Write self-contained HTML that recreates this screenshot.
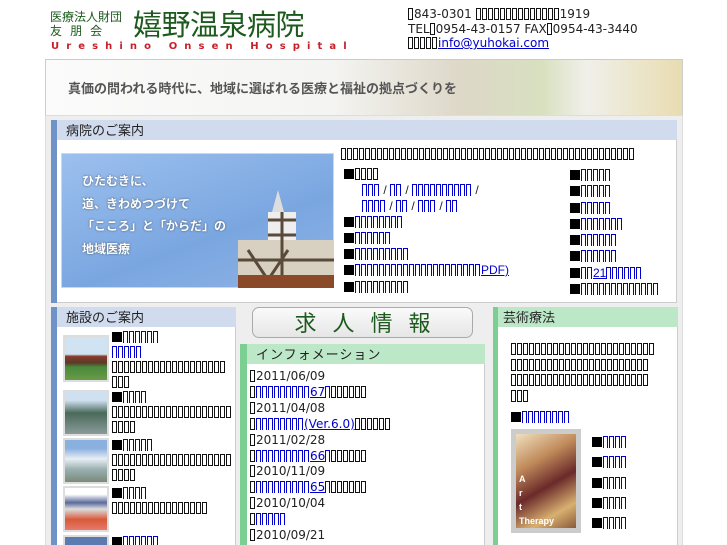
<!DOCTYPE html>
<html><head><meta charset="utf-8">
<style>
*{margin:0;padding:0;box-sizing:border-box}
html,body{width:727px;height:545px;overflow:hidden}
body{background:#fff;font-family:"Liberation Sans","DejaVu Sans","Noto Sans CJK JP",sans-serif;font-size:12px;color:#222;position:relative}
.a{position:absolute;white-space:nowrap}
.w{white-space:normal}
i.b{display:inline-block;width:5px;height:12px;border:1px solid #111;margin-right:1px;vertical-align:-2px}
a{color:#00c;text-decoration:underline}
a i.b{border-color:#00c;border-bottom:none}
.sq{display:inline-block;width:10px;height:10px;background:#000;margin-right:1px;vertical-align:-1px}
.hd{position:absolute;height:20px;font-family:"Noto Sans CJK JP",sans-serif;font-size:13px;line-height:20px;padding-left:9px;color:#222}
</style></head><body>
<div class="a" style="left:50px;top:10px;font-family:'Noto Sans CJK JP',sans-serif;color:#1d5a1d;font-size:12px;line-height:14px">医療法人財団<br>友&nbsp;&nbsp;&nbsp;朋&nbsp;&nbsp;&nbsp;会</div>
<div class="a" style="left:133px;top:4px;font-family:'Noto Sans CJK JP',sans-serif;color:#1d5a1d;font-size:29px;line-height:38px;letter-spacing:-0.5px">嬉野温泉病院</div>
<div class="a" style="left:51px;top:41px;color:#c8202a;font-size:10px;font-weight:bold;letter-spacing:7.1px;font-family:'DejaVu Sans',sans-serif">Ureshino Onsen Hospital</div>
<div class="a" style="left:408px;top:7px;font-size:12px;line-height:14.5px;font-family:'DejaVu Sans',sans-serif;color:#222">▯843-0301 ▯▯▯▯▯▯▯▯▯▯▯▯▯▯1919<br>TEL▯0954-43-0157 FAX▯0954-43-3440<br>▯▯▯▯▯<a href="#">info@yuhokai.com</a></div>
<div class="a" style="left:45px;top:59px;width:638px;height:57px;border:1px solid #ccc;background:linear-gradient(90deg,#fbfbfb 0%,#f4f4f2 45%,#ddd8c8 65%,#d8e0c0 78%,#f0f0ea 85%,#e8dcb0 100%)"></div>
<div class="a" style="left:68px;top:78px;font-family:'Noto Sans CJK JP',sans-serif;font-size:13px;color:#555;font-weight:bold">真価の問われる時代に、地域に選ばれる医療と福祉の拠点づくりを</div>
<div class="a" style="left:45px;top:115px;width:638px;height:440px;background:#eee;border:1px solid #ddd"></div>
<div class="a" style="left:51px;top:120px;width:626px;height:183px;background:#fff;border:1px solid #ccc"></div>
<div class="a" style="left:51px;top:120px;width:6px;height:183px;background:#6f93c8"></div>
<div class="hd" style="left:57px;top:120px;width:620px;background:#d0dcee">病院のご案内</div>
<div class="a" style="left:61px;top:153px;width:273px;height:135px;background:linear-gradient(160deg,#9cc0ee,#7aa6e0 60%,#8fb3e6);border:1px solid #c9d8f0"></div>
<div class="a" style="left:82px;top:170px;color:#fff;font-family:'Noto Sans CJK JP',sans-serif;font-size:12px;font-weight:bold;line-height:22.5px;text-shadow:0 0 2px #456">ひたむきに、<br>道、きわめつづけて<br>「こころ」と「からだ」の<br>地域医療</div>
<svg class="a" style="left:228px;top:190px" width="106" height="98"><polygon points="50,0 44,22 56,22" fill="#ddd"/><rect x="40" y="22" width="28" height="76" fill="#eee"/><rect x="10" y="50" width="96" height="48" fill="#d8d0c0"/><path d="M40 30h28M40 45h28M54 22v76M20 60l20 30M60 60l-20 30M10 70h96" stroke="#5a4a3a" stroke-width="3"/><rect x="10" y="85" width="96" height="13" fill="#8a4a2a"/></svg>
<div class="a" style="left:341px;top:147px"><span id="r1"></span></div>
<div class="a" style="left:344px;top:167px"><span class="sq"></span>▯▯▯▯</div>
<div class="a" style="left:362px;top:183px"><a href="#">▯▯▯</a> / <a href="#">▯▯</a> / <a href="#">▯▯▯▯▯▯▯▯▯▯</a> /</div>
<div class="a" style="left:362px;top:199px"><a href="#">▯▯▯▯</a> / <a href="#">▯▯</a> / <a href="#">▯▯▯</a> / <a href="#">▯▯</a></div>
<div class="a" style="left:344px;top:215px"><span class="sq"></span><a href="#">▯▯▯▯▯▯▯▯</a></div>
<div class="a" style="left:344px;top:231px"><span class="sq"></span><a href="#">▯▯▯▯▯▯</a></div>
<div class="a" style="left:344px;top:247px"><span class="sq"></span><a href="#">▯▯▯▯▯▯▯▯▯</a></div>
<div class="a" style="left:344px;top:263px"><span class="sq"></span><a href="#">▯▯▯▯▯▯▯▯▯▯▯▯▯▯▯▯▯▯▯▯▯PDF)</a></div>
<div class="a" style="left:344px;top:280px"><span class="sq"></span><a href="#">▯▯▯▯▯▯▯▯▯</a></div>
<div class="a" style="left:570px;top:167px;line-height:16.3px">
<div><span class="sq"></span><a href="#">▯▯▯▯▯</a></div>
<div><span class="sq"></span><a href="#">▯▯▯▯▯</a></div>
<div><span class="sq"></span><a href="#">▯▯▯▯▯</a></div>
<div><span class="sq"></span><a href="#">▯▯▯▯▯▯▯</a></div>
<div><span class="sq"></span><a href="#">▯▯▯▯▯▯</a></div>
<div><span class="sq"></span><a href="#">▯▯▯▯▯▯</a></div>
<div><span class="sq"></span><a href="#">▯▯21▯▯▯▯▯▯</a></div>
<div><span class="sq"></span><a href="#">▯▯▯▯▯▯▯▯▯▯▯▯▯</a></div>
</div>
<div class="a" style="left:51px;top:307px;width:185px;height:250px;background:#fff;border:1px solid #ccc"></div>
<div class="a" style="left:51px;top:307px;width:6px;height:250px;background:#6f93c8"></div>
<div class="hd" style="left:57px;top:307px;width:179px;background:#d0dcee">施設のご案内</div>
<div class="a" style="left:63px;top:335px;width:46px;height:47px;background:linear-gradient(#cfe3f3 40%,#8a3a2a 45%,#5a3a2a 60%,#4a8a3a 70%,#6a9a4a);border:2px solid #ddd"></div>
<div class="a" style="left:63px;top:390px;width:46px;height:46px;background:linear-gradient(#cfe0f0 20%,#4a6a5a 50%,#8a9a9a);border:2px solid #ddd"></div>
<div class="a" style="left:63px;top:438px;width:46px;height:46px;background:linear-gradient(#8ab0e0 20%,#e8eef4 45%,#9ab0b0 70%,#7a8a7a);border:2px solid #ddd"></div>
<div class="a" style="left:63px;top:486px;width:46px;height:46px;background:linear-gradient(#fff 15%,#5a6a9a 35%,#ddd 50%,#d85a3a 75%,#e87a6a);border:2px solid #ddd"></div>
<div class="a" style="left:63px;top:535px;width:46px;height:15px;background:#5a7ab0;border:2px solid #ddd"></div>
<div class="a" style="left:112px;top:330px"><span class="sq"></span><a href="#">▯▯▯▯▯▯</a></div>
<div class="a" style="left:112px;top:345px"><a href="#">▯▯▯▯▯</a></div>
<div class="a" style="left:112px;top:360px">▯▯▯▯▯▯▯▯▯▯▯▯▯▯▯▯▯▯▯</div>
<div class="a" style="left:112px;top:375px">▯▯▯</div>
<div class="a" style="left:112px;top:390px"><span class="sq"></span><a href="#">▯▯▯▯</a></div>
<div class="a" style="left:112px;top:405px">▯▯▯▯▯▯▯▯▯▯▯▯▯▯▯▯▯▯▯▯</div>
<div class="a" style="left:112px;top:420px">▯▯▯▯</div>
<div class="a" style="left:112px;top:438px"><span class="sq"></span><a href="#">▯▯▯▯▯</a></div>
<div class="a" style="left:112px;top:453px">▯▯▯▯▯▯▯▯▯▯▯▯▯▯▯▯▯▯▯▯</div>
<div class="a" style="left:112px;top:468px">▯▯▯▯</div>
<div class="a" style="left:112px;top:486px"><span class="sq"></span><a href="#">▯▯▯▯</a></div>
<div class="a" style="left:112px;top:501px">▯▯▯▯▯▯▯▯▯▯▯▯▯▯▯▯</div>
<div class="a" style="left:112px;top:535px"><span class="sq"></span><a href="#">▯▯▯▯▯▯</a></div>
<div class="a" style="left:252px;top:307px;width:221px;height:31px;border:1px solid #aaa;border-radius:7px;background:linear-gradient(#fafafa,#e6e6e6);text-align:center;font-family:'Noto Sans CJK JP',sans-serif;font-size:22px;line-height:29px;color:#1d5a1d;letter-spacing:16px;padding-left:16px">求人情報</div>
<div class="a" style="left:240px;top:344px;width:245px;height:210px;background:#fff;border:1px solid #ccc"></div>
<div class="a" style="left:240px;top:344px;width:7px;height:210px;background:#7ccf93"></div>
<div class="hd" style="left:247px;top:344px;width:238px;background:#bde8c8;letter-spacing:1px">インフォメーション</div>
<div class="a" style="left:250px;top:369px;line-height:15.9px;font-size:12px;font-family:'DejaVu Sans',sans-serif">
<div>▯2011/06/09</div><div>▯<a href="#">▯▯▯▯▯▯▯▯▯67▯</a>▯▯▯▯▯▯</div>
<div>▯2011/04/08</div><div>▯<a href="#">▯▯▯▯▯▯▯▯(Ver.6.0)</a>▯▯▯▯▯▯</div>
<div>▯2011/02/28</div><div>▯<a href="#">▯▯▯▯▯▯▯▯▯66▯</a>▯▯▯▯▯▯</div>
<div>▯2010/11/09</div><div>▯<a href="#">▯▯▯▯▯▯▯▯▯65▯</a>▯▯▯▯▯▯</div>
<div>▯2010/10/04</div><div>▯<a href="#">▯▯▯▯▯</a></div>
<div>▯2010/09/21</div>
</div>
<div class="a" style="left:493px;top:307px;width:185px;height:250px;background:#fff;border:1px solid #ccc"></div>
<div class="a" style="left:493px;top:307px;width:5px;height:250px;background:#7ccf93"></div>
<div class="hd" style="left:498px;top:307px;width:180px;background:#bde8c8;padding-left:5px">芸術療法</div>
<div class="a" style="left:511px;top:342px;line-height:15.5px">▯▯▯▯▯▯▯▯▯▯▯▯▯▯▯▯▯▯▯▯▯▯▯▯<br>▯▯▯▯▯▯▯▯▯▯▯▯▯▯▯▯▯▯▯▯▯▯▯<br>▯▯▯▯▯▯▯▯▯▯▯▯▯▯▯▯▯▯▯▯▯▯▯<br>▯▯▯</div>
<div class="a" style="left:511px;top:410px"><span class="sq"></span><a href="#">▯▯▯▯▯▯▯▯</a></div>
<div class="a" style="left:511px;top:429px;width:70px;height:104px;background:#ccc;padding:5px;overflow:hidden"><div style="width:100%;height:100%;background:linear-gradient(150deg,#f0e0c0,#c08a5a 30%,#6a2a2a 55%,#d8b070 80%,#8a5a3a);color:#fff;font-size:9px;font-weight:bold;position:relative;overflow:hidden"><span style="position:absolute;left:3px;top:38px;line-height:14px">A<br>r<br>t<br>Therapy</span></div></div>
<div class="a" style="left:592px;top:432px;line-height:20.3px">
<div><span class="sq"></span><a href="#">▯▯▯▯</a></div>
<div><span class="sq"></span><a href="#">▯▯▯▯</a></div>
<div><span class="sq"></span><a href="#">▯▯▯▯</a></div>
<div><span class="sq"></span><a href="#">▯▯▯▯</a></div>
<div><span class="sq"></span><a href="#">▯▯▯▯</a></div>
</div>
<script>
document.getElementById('r1').textContent='▯'.repeat(49);
(function w(n){if(n.nodeType==3){if(n.data.indexOf('▯')<0)return;var f=document.createDocumentFragment();n.data.split(/(▯)/).forEach(function(s){if(s==='▯'){var e=document.createElement('i');e.className='b';f.appendChild(e)}else if(s)f.appendChild(document.createTextNode(s))});n.parentNode.replaceChild(f,n)}else if(n.nodeName!='SCRIPT'){Array.prototype.slice.call(n.childNodes).forEach(w)}})(document.body);
</script>
</body></html>
